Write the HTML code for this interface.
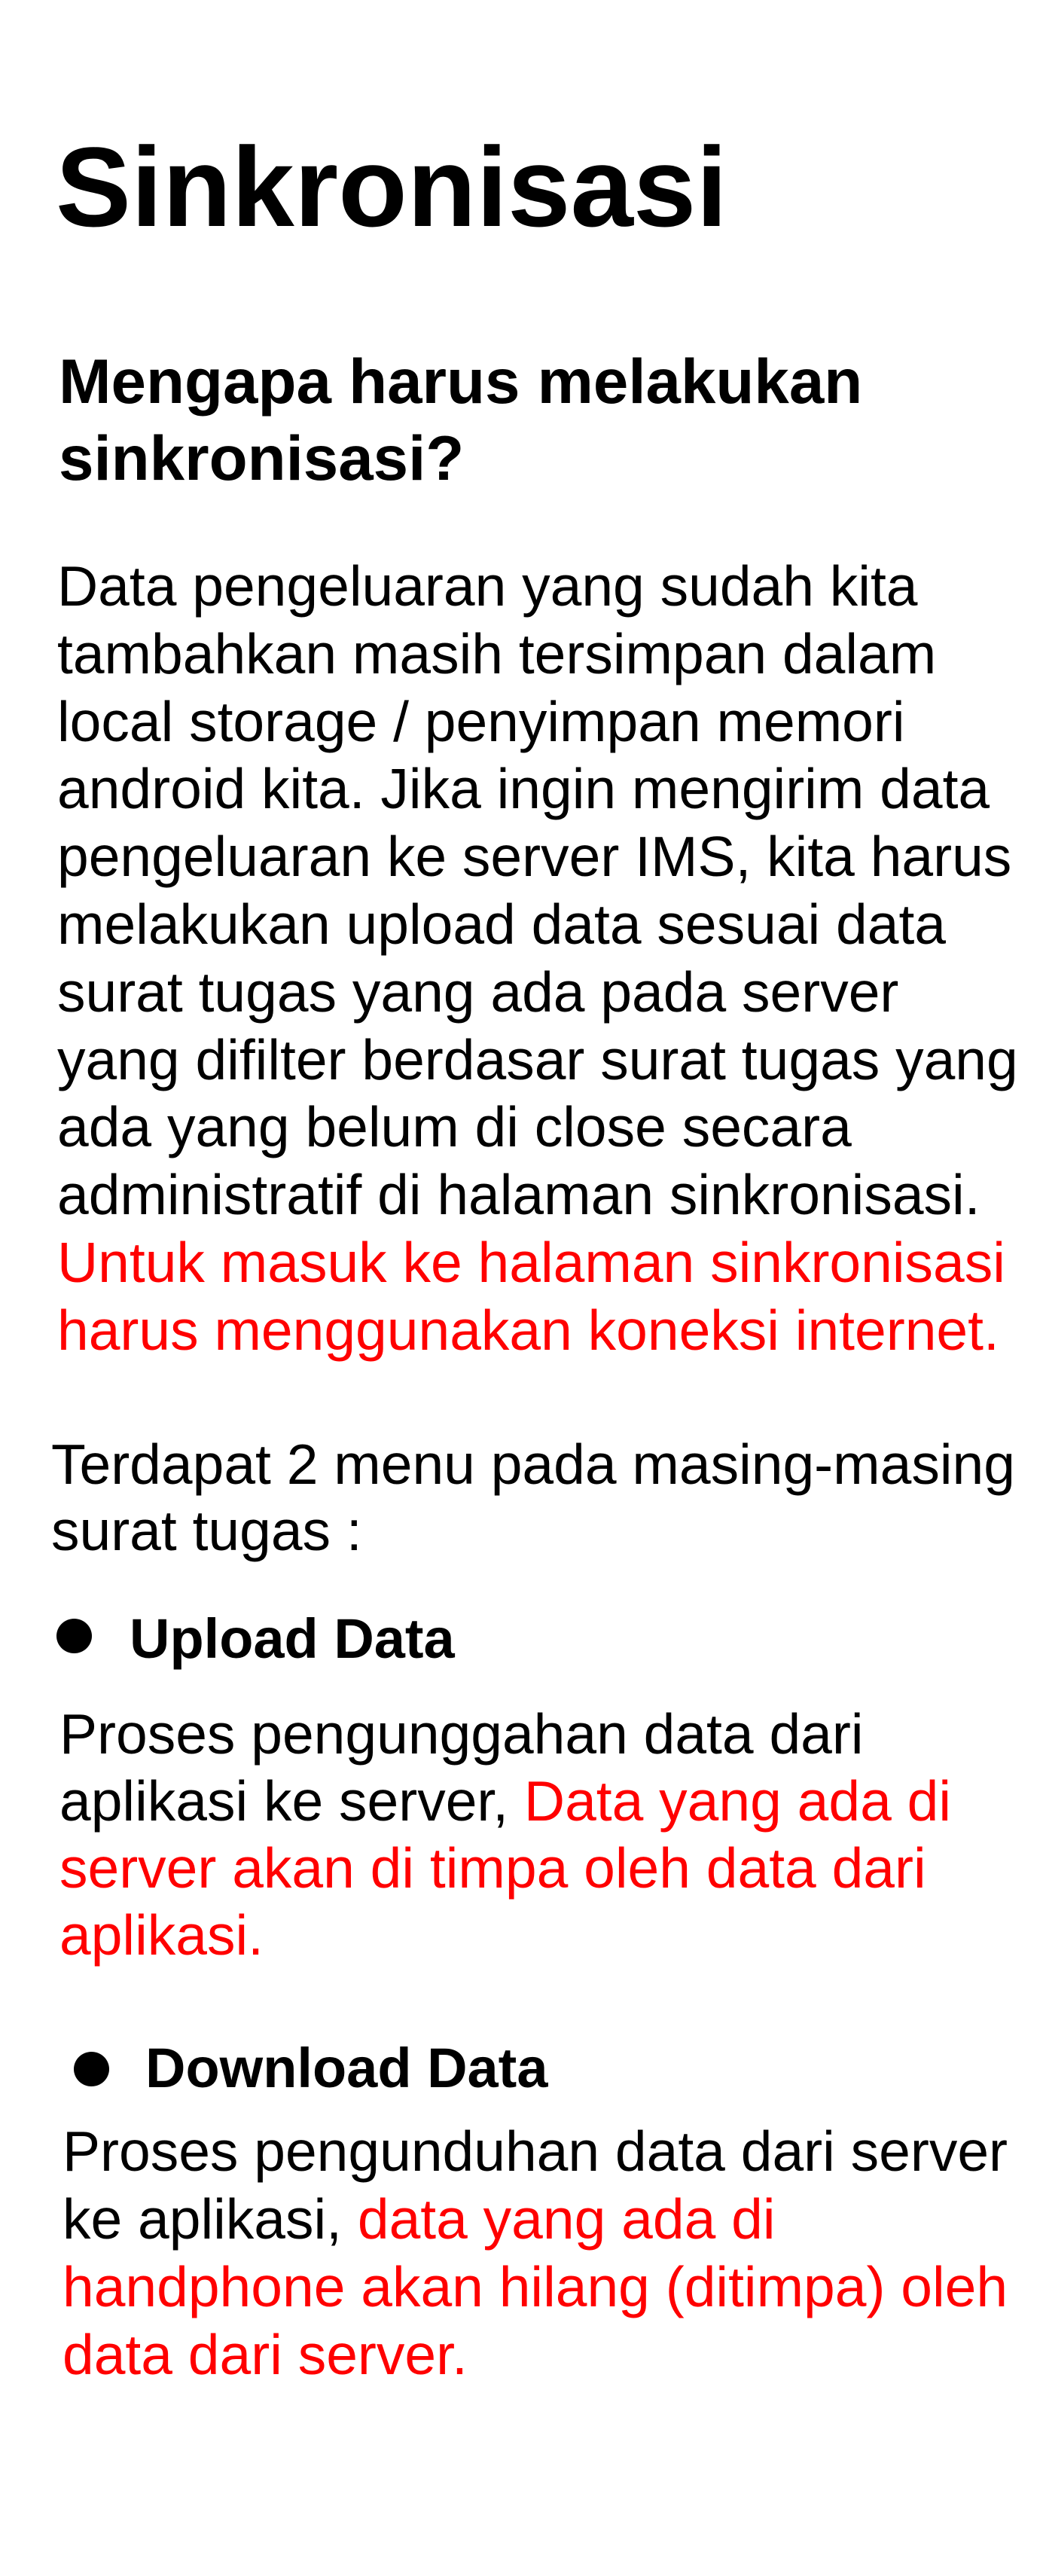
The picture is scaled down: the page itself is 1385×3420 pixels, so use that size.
<!DOCTYPE html>
<html><head><meta charset="utf-8"><style>
html,body{margin:0;padding:0;background:#fff;}
body{width:1385px;height:3420px;position:relative;overflow:hidden;font-family:"Liberation Sans",Arial,sans-serif;color:#000;}
.a{position:absolute;white-space:nowrap;}
.r{color:#ff0000;}
.b{font-weight:bold;}
.dot{position:absolute;width:47px;height:46px;border-radius:50%;background:#000;}
</style></head><body>
<div class="a b" style="left:74px;top:173px;font-size:150px;line-height:150px;">Sinkronisasi</div>
<div class="a b" style="left:78px;top:455px;font-size:83.5px;line-height:102px;">Mengapa harus melakukan<br>sinkronisasi?</div>
<div class="a" style="left:76px;top:734px;font-size:75px;line-height:89.8px;">Data pengeluaran yang sudah kita<br>tambahkan masih tersimpan dalam<br>local storage / penyimpan memori<br>android kita. Jika ingin mengirim data<br>pengeluaran ke server IMS, kita harus<br>melakukan upload data sesuai data<br>surat tugas yang ada pada server<br>yang difilter berdasar surat tugas yang<br>ada yang belum di close secara<br>administratif di halaman sinkronisasi.<br><span class="r">Untuk masuk ke halaman sinkronisasi<br>harus menggunakan koneksi internet.</span></div>
<div class="a" style="left:68px;top:1900px;font-size:75px;line-height:88px;">Terdapat 2 menu pada masing-masing<br>surat tugas :</div>
<div class="dot" style="left:75px;top:2149px;"></div>
<div class="a b" style="left:172px;top:2139px;font-size:74px;line-height:74px;">Upload Data</div>
<div class="a" style="left:79px;top:2258px;font-size:75px;line-height:89px;">Proses pengunggahan data dari<br>aplikasi ke server, <span class="r">Data yang ada di<br>server akan di timpa oleh data dari<br>aplikasi.</span></div>
<div class="dot" style="left:98px;top:2724px;"></div>
<div class="a b" style="left:193px;top:2709px;font-size:74px;line-height:74px;">Download Data</div>
<div class="a" style="left:83px;top:2811px;font-size:75px;line-height:90px;">Proses pengunduhan data dari server<br>ke aplikasi, <span class="r">data yang ada di<br>handphone akan hilang (ditimpa) oleh<br>data dari server.</span></div>
</body></html>
